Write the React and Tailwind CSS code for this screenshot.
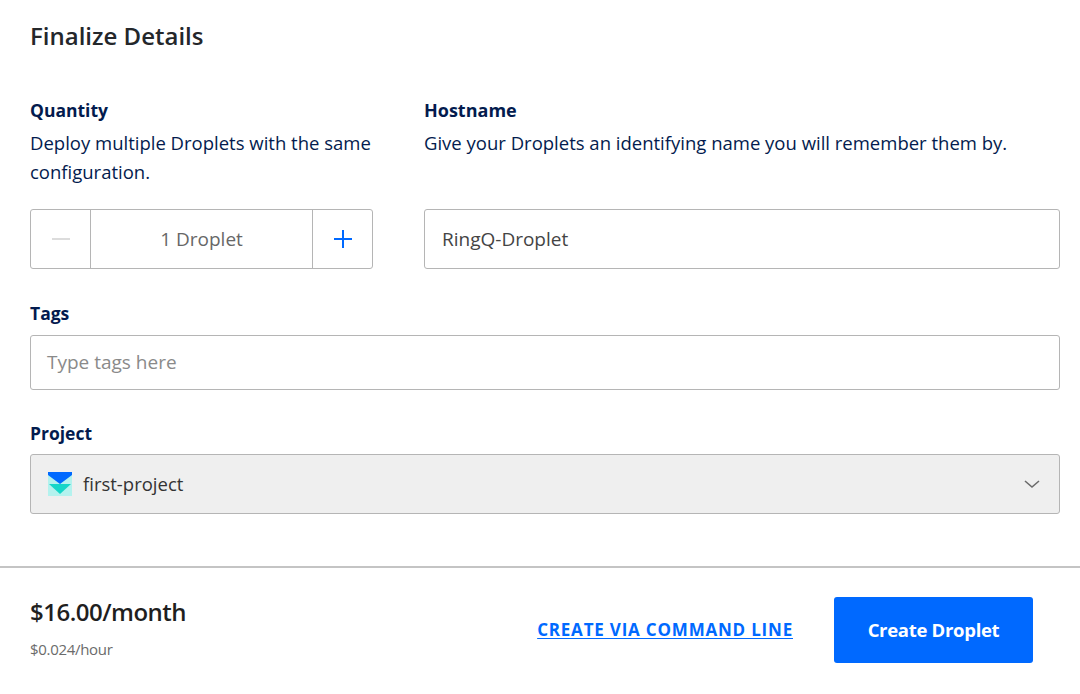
import React, { useState } from 'react';

const FONT = { fontFamily: '"Open Sans", "Liberation Sans", sans-serif' };

function ProjectIcon() {
  return (
    <svg width="24" height="24" viewBox="0 0 24 24" className="shrink-0">
      <rect x="0" y="0" width="24" height="24" fill="#b4f2ee" />
      <path d="M0 0 H24 V3 L12 12 L0 3 Z" fill="#0069ff" />
      <path d="M1 12 H23 L12 22 Z" fill="#15d6c8" />
    </svg>
  );
}

function Chevron() {
  return (
    <svg width="18" height="18" viewBox="0 0 18 18" fill="none" stroke="#6b6b6b" strokeWidth="1.6">
      <path d="M2 6 L9 12 L16 6" />
    </svg>
  );
}

export default function App() {
  const [count, setCount] = useState(1);

  return (
    <div className="min-h-[694px] w-[1080px] bg-white text-[#031b4e]" style={FONT}>
      <div className="pl-[30px] pr-[20px] pt-[20px]">
        <h1 className="text-[24px] font-semibold leading-[32px] text-[#24272b]">Finalize Details</h1>

        <div className="mt-[46px] flex gap-[51px]">
          <div className="w-[343px] shrink-0">
            <div className="text-[17.5px] font-bold leading-[24px]">Quantity</div>
            <p className="mt-[6px] text-[18.5px] leading-[29px]">Deploy multiple Droplets with the same configuration.</p>
            <div className="mt-[23px] flex h-[60px] rounded-[3px] border border-[#b5b5b5]">
              <button
                className="flex w-[60px] items-center justify-center border-r border-[#b5b5b5]"
                onClick={() => setCount(c => Math.max(1, c - 1))}
              >
                <span className="block h-[2px] w-[18px] bg-[#dcdcdc]" />
              </button>
              <div className="flex flex-1 items-center justify-center text-[19px] text-[#676767]">
                {count} Droplet{count > 1 ? 's' : ''}
              </div>
              <button
                className="flex w-[60px] items-center justify-center border-l border-[#b5b5b5]"
                onClick={() => setCount(c => c + 1)}
              >
                <svg width="20" height="20" viewBox="0 0 20 20" stroke="#0069ff" strokeWidth="2">
                  <path d="M10 1 V19 M1 10 H19" />
                </svg>
              </button>
            </div>
          </div>

          <div className="flex-1">
            <div className="text-[18px] font-bold leading-[24px]">Hostname</div>
            <p className="mt-[6px] text-[18.5px] leading-[29px]">Give your Droplets an identifying name you will remember them by.</p>
            <div className="mt-[52px] flex h-[60px] items-center rounded-[3px] border border-[#b5b5b5] px-[17px] text-[19px] text-[#444]">
              RingQ-Droplet
            </div>
          </div>
        </div>

        <div className="mt-[32px] text-[17.5px] font-bold leading-[24px]">Tags</div>
        <div className="mt-[10px] flex h-[55px] items-center rounded-[3px] border border-[#b5b5b5] px-[16px] text-[19px] text-[#8a8a8a]">
          Type tags here
        </div>

        <div className="mt-[31px] text-[17.5px] font-bold leading-[24px]">Project</div>
        <div className="mt-[9px] flex h-[60px] items-center gap-[11px] rounded-[3px] border border-[#b5b5b5] bg-[#efefef] pl-[17px] pr-[18px] text-[18.5px] text-[#333]">
          <ProjectIcon />
          <span className="flex-1">first-project</span>
          <Chevron />
        </div>
      </div>

      <div className="mt-[52px] border-t-2 border-[#c4c4c4]" />

      <div className="flex items-center px-[30px] pt-[29px]">
        <div className="flex-1 self-start">
          <div className="text-[24px] font-semibold leading-[30px] tracking-[-0.5px] text-[#1f1f1f]">$16.00/month</div>
          <div className="mt-[12px] text-[15px] leading-[20px] tracking-[-0.3px] text-[#6b6b6b]">$0.024/hour</div>
        </div>
        <a href="#" className="mr-[41px] text-[17px] font-bold tracking-[0.8px] text-[#0069ff] underline underline-offset-2">
          CREATE VIA COMMAND LINE
        </a>
        <button className="mr-[17px] h-[66px] w-[199px] rounded-[3px] bg-[#0069ff] text-[18.5px] font-bold tracking-[-0.3px] text-white">
          Create Droplet
        </button>
      </div>
    </div>
  );
}
